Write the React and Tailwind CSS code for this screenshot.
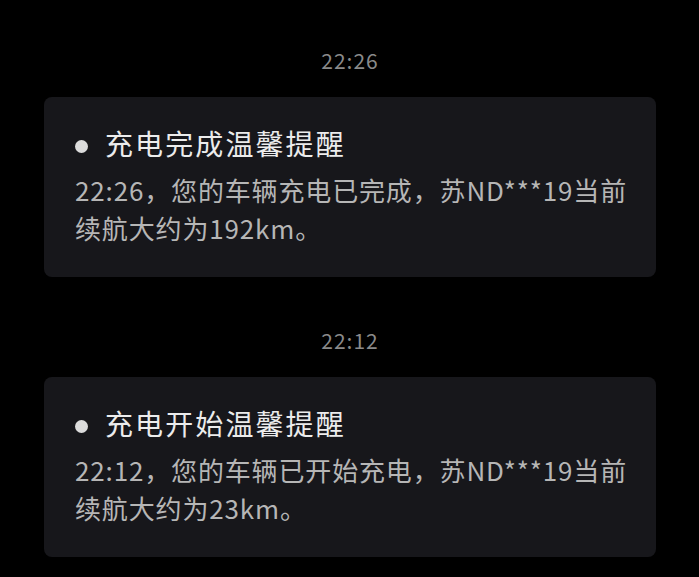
const messages = [
  {
    time: '22:26',
    title: '充电完成温馨提醒',
    body: '22:26，您的车辆充电已完成，苏ND***19当前续航大约为192km。',
  },
  {
    time: '22:12',
    title: '充电开始温馨提醒',
    body: '22:12，您的车辆已开始充电，苏ND***19当前续航大约为23km。',
  },
];

function MessageCard({ msg }) {
  return (
    <div>
      <div className="text-center text-[21px] leading-[24px] text-[#8a8a8a] tracking-[1px]">{msg.time}</div>
      <div className="mt-[25px] h-[180px] rounded-[8px] bg-[#17171b] pl-[31px] pr-[20px] pt-[28px]">
        <div className="flex items-center">
          <span className="mt-[6px] h-[13px] w-[13px] shrink-0 rounded-full bg-[#dcdcdc]" />
          <span className="ml-[17px] text-[28px] leading-[36px] tracking-[2.1px] text-[#ececec]">{msg.title}</span>
        </div>
        <p className="mt-[10px] text-[26px] leading-[38px] tracking-[0.85px] text-[#b6b6b6]">{msg.body}</p>
      </div>
    </div>
  );
}

export default function App() {
  return (
    <div
      className="min-h-[577px] w-full bg-black px-[44px] pt-[48px]"
      style={{ fontFamily: '"Noto Sans CJK SC", "Noto Sans", sans-serif' }}
    >
      <div className="flex w-[612px] flex-col gap-[51px]">
        {messages.map((m) => (
          <MessageCard key={m.time} msg={m} />
        ))}
      </div>
    </div>
  );
}
